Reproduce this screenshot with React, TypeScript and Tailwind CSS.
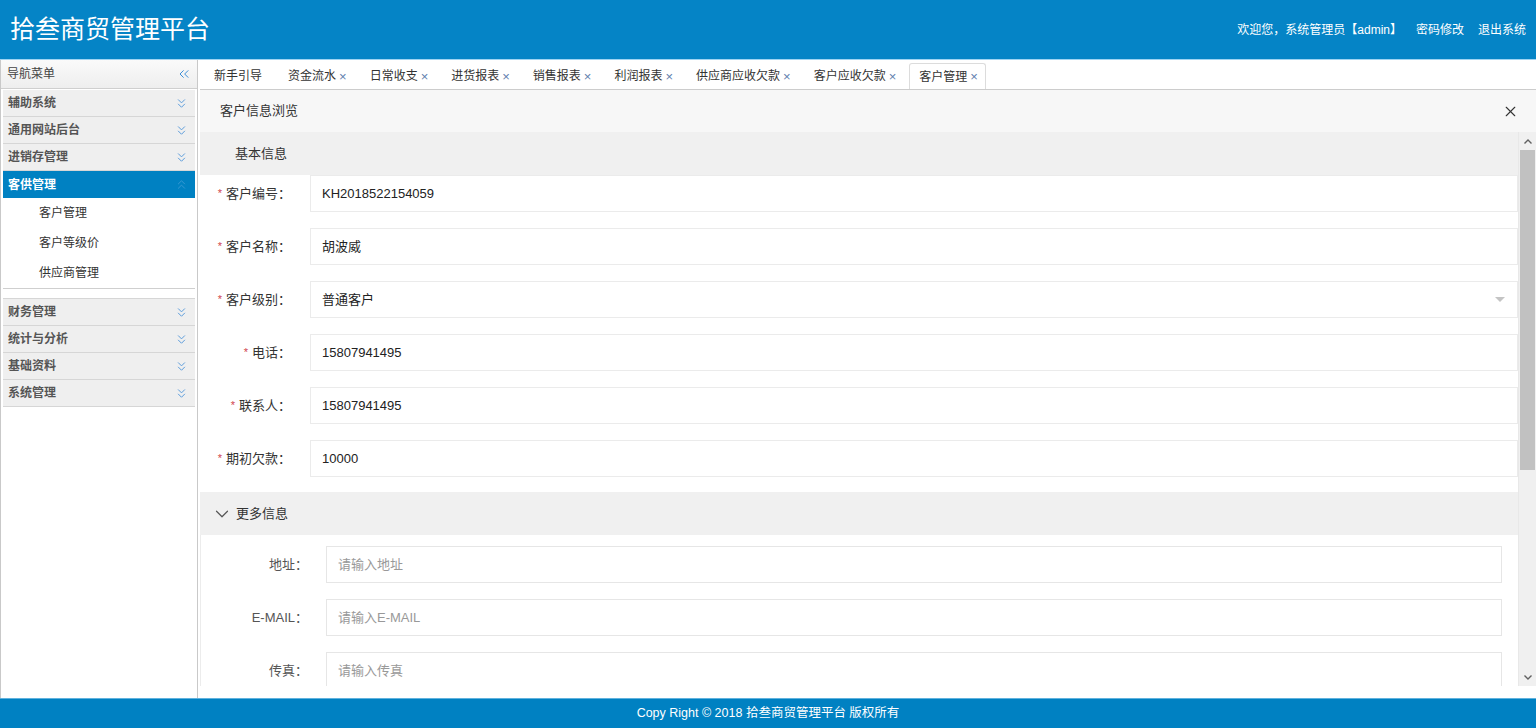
import { ChevronDown, ChevronsDown, ChevronsLeft, ChevronsUp, X } from "lucide-react";

const font = "font-['Liberation_Sans','Noto_Sans_CJK_SC',sans-serif]";

const tabs = [
	{ name: "新手引导", closable: false },
	{ name: "资金流水", closable: true },
	{ name: "日常收支", closable: true },
	{ name: "进货报表", closable: true },
	{ name: "销售报表", closable: true },
	{ name: "利润报表", closable: true },
	{ name: "供应商应收欠款", closable: true },
	{ name: "客户应收欠款", closable: true },
	{ name: "客户管理", closable: true, active: true },
];

const menusTop = ["辅助系统", "通用网站后台", "进销存管理"];
const subMenus = ["客户管理", "客户等级价", "供应商管理"];
const menusBottom = ["财务管理", "统计与分析", "基础资料", "系统管理"];

const baseFields = [
	{ label: "客户编号", value: "KH2018522154059" },
	{ label: "客户名称", value: "胡波威" },
	{ label: "客户级别", value: "普通客户", select: true },
	{ label: "电话", value: "15807941495" },
	{ label: "联系人", value: "15807941495" },
	{ label: "期初欠款", value: "10000" },
];

const moreFields = [
	{ label: "地址", placeholder: "请输入地址" },
	{ label: "E-MAIL", placeholder: "请输入E-MAIL" },
	{ label: "传真", placeholder: "请输入传真" },
];

function MenuItem({ name }: { name: string }) {
	return (
		<div className="flex h-[27px] items-center justify-between border-b border-[#d6d6d6] bg-[#efefef] pl-[5px] pr-[6px]">
			<span className="text-[12px] font-bold text-[#555]">{name}</span>
			<ChevronsDown className="h-[15px] w-[15px] text-[#5d9ddb]" strokeWidth={1.6} />
		</div>
	);
}

function Sidebar() {
	return (
		<aside className="flex w-[198px] flex-none flex-col border-x border-[#c9c9c9] bg-white">
			<div className="flex h-[29px] flex-none items-center justify-between border-b border-[#cfcfcf] bg-gradient-to-b from-[#fafafa] to-[#eeeeee] pl-[6px] pr-[5px]">
				<span className="text-[12px] text-[#444]">导航菜单</span>
				<ChevronsLeft className="h-[16px] w-[16px] text-[#3d8fd8]" strokeWidth={1.5} />
			</div>
			<div className="px-[2px] pt-[1px]">
				{menusTop.map((m) => (
					<MenuItem key={m} name={m} />
				))}
				<div className="flex h-[27px] items-center justify-between bg-[#0081c2] pl-[5px] pr-[6px]">
					<span className="text-[12px] font-bold text-white">客供管理</span>
					<ChevronsUp className="h-[15px] w-[15px] text-[#3a9ad2]" strokeWidth={1.5} />
				</div>
				<div className="border-b border-[#cfcfcf]">
					{subMenus.map((s) => (
						<div key={s} className="flex h-[30px] items-center pl-[36px] text-[12px] text-[#333]">
							{s}
						</div>
					))}
				</div>
				<div className="mt-[9px] border-t border-[#d6d6d6]">
					{menusBottom.map((m) => (
						<MenuItem key={m} name={m} />
					))}
				</div>
			</div>
		</aside>
	);
}

function Tabs() {
	return (
		<div className="flex h-[30px] flex-none items-end border-b border-[#cccccc] bg-white pl-[4px]">
			{tabs.map((t) => (
				<div
					key={t.name}
					className={
						t.active
							? "mr-[2px] flex h-[26px] items-center rounded-t-[3px] border border-b-0 border-[#dcdcdc] bg-white pl-[9px] pr-[7px] text-[12px] text-[#333]"
							: "mr-[2px] flex h-[26px] items-center pl-[10px] pr-[11px] text-[12px] text-[#333]"
					}
				>
					<span>{t.name}</span>
					{t.closable ? (
						<span className="ml-[3px] text-[13px] leading-none text-[#5f80ae]">×</span>
					) : (
						<span className="w-[3px]" />
					)}
				</div>
			))}
		</div>
	);
}

function Scrollbar() {
	return (
		<div className="flex w-[18px] flex-none flex-col border-l border-[#e8e8e8] bg-[#f0f0f0]">
			<div className="flex h-[18px] items-center justify-center">
				<svg width="8" height="5" viewBox="0 0 8 5">
					<path d="M0.5 4.5 L4 1 L7.5 4.5" fill="none" stroke="#606060" strokeWidth="1.4" />
				</svg>
			</div>
			<div className="mx-[1px] h-[320px] bg-[#c1c1c1]" />
			<div className="flex-1" />
			<div className="flex h-[18px] items-center justify-center">
				<svg width="8" height="5" viewBox="0 0 8 5">
					<path d="M0.5 0.5 L4 4 L7.5 0.5" fill="none" stroke="#606060" strokeWidth="1.4" />
				</svg>
			</div>
		</div>
	);
}

function BaseRow({ label, value, select }: { label: string; value: string; select?: boolean }) {
	return (
		<div className="flex h-[37px] items-center">
			<div className="flex w-[110px] flex-none items-center justify-end pr-[19px] text-[13px] text-[#333]">
				<span className="mr-[4px] text-[11px] text-[#d0454c]">*</span>
				<span>{label}：</span>
			</div>
			<div className="flex h-full flex-1 items-center justify-between border border-[#ebebeb] bg-white pl-[11px] pr-[12px] text-[13px] text-[#222]">
				<span>{value}</span>
				{select && (
					<svg width="10" height="5" viewBox="0 0 10 5">
						<path d="M0 0 L10 0 L5 5 Z" fill="#c4c4c4" />
					</svg>
				)}
			</div>
		</div>
	);
}

function MoreRow({ label, placeholder }: { label: string; placeholder: string }) {
	return (
		<div className="flex h-[37px] flex-none items-center pr-[16px]">
			<div className="w-[125px] flex-none pr-[18px] text-right text-[13px] text-[#555]">{label}：</div>
			<div className="flex h-full flex-1 items-center border border-[#e6e6e6] bg-white pl-[11px] text-[13px] text-[#999]">
				{placeholder}
			</div>
		</div>
	);
}

function Panel() {
	return (
		<div className="flex min-h-0 flex-1 flex-col bg-white">
			<div className="flex h-[42px] flex-none items-center justify-between bg-[#f7f7f7] pl-[20px] pr-[17px]">
				<span className="text-[13px] text-[#333]">客户信息浏览</span>
				<X className="h-[17px] w-[17px] text-[#333]" strokeWidth={1.6} />
			</div>
			<div className="flex h-[554px] flex-none">
				<div className="flex flex-1 flex-col overflow-hidden">
					<div className="flex h-[43px] flex-none items-center bg-[#f0f0f0] pl-[35px] text-[13px] text-[#333]">基本信息</div>
					<div className="flex flex-none flex-col gap-[16px] pb-[15px]">
						{baseFields.map((f) => (
							<BaseRow key={f.label} {...f} />
						))}
					</div>
					<div className="flex h-[43px] flex-none items-center bg-[#f0f0f0] pl-[11px] text-[13px] text-[#333]">
						<ChevronDown className="mr-[3px] h-[22px] w-[22px] text-[#555]" strokeWidth={1.3} />
						更多信息
					</div>
					<div className="flex flex-none flex-col gap-[16px] border-l border-[#ececec] pt-[11px]">
						{moreFields.map((f) => (
							<MoreRow key={f.label} {...f} />
						))}
					</div>
				</div>
				<Scrollbar />
			</div>
			<div className="flex-1 bg-white" />
		</div>
	);
}

export default function App() {
	return (
		<div className={`flex h-[728px] w-full flex-col overflow-hidden bg-white ${font}`}>
			<header className="flex h-[60px] flex-none items-center justify-between border-b border-[#9fd4f2] bg-[#0584c6] pl-[10px] pr-[10px]">
				<h1 className="text-[25px] font-normal leading-none text-white">拾叁商贸管理平台</h1>
				<div className="flex items-center gap-[14px] text-[12px] text-white">
					<span>欢迎您，系统管理员【admin】</span>
					<span>密码修改</span>
					<span>退出系统</span>
				</div>
			</header>
			<div className="flex min-h-0 flex-1">
				<Sidebar />
				<main className="ml-[2px] flex min-w-0 flex-1 flex-col">
					<Tabs />
					<Panel />
				</main>
			</div>
			<footer className="flex h-[30px] flex-none items-center justify-center border-t border-[#5fb2de] bg-[#0081c2] text-[12.5px] text-white">
				Copy Right © 2018 拾叁商贸管理平台 版权所有
			</footer>
		</div>
	);
}
